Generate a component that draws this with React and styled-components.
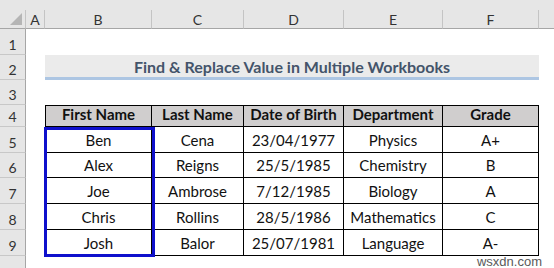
import React from "react";
import styled, { createGlobalStyle } from "styled-components";

const Global = createGlobalStyle`
  html, body { margin: 0; padding: 0; background: #fff; }
  body { font-family: "Lato", "Open Sans", sans-serif; }
`;

const Sheet = styled.div`
  position: relative;
  width: 554px;
  height: 268px;
  overflow: hidden;
  background: #fff;
  display: grid;
  grid-template-columns: 26px 19px 107px 92px 100px 99px 96px 1fr;
  grid-template-rows: 10px 19px 26px 25px 25px 22px 26px 25px 26px 26px 26px 1fr;
  font-family: "Lato", "Open Sans", sans-serif;
`;

const TopStrip = styled.div`
  grid-column: 1 / -1;
  grid-row: 1;
  background: #e6e6e6;
`;

const Corner = styled.div`
  grid-column: 1;
  grid-row: 2;
  background: #e6e6e6;
  border-right: 1px solid #c4c4c4;
  border-bottom: 1px solid #a6a6a6;
  box-sizing: border-box;
  position: relative;
  &::after {
    content: "";
    position: absolute;
    right: 3px;
    bottom: 3px;
    width: 0;
    height: 0;
    border-left: 12px solid transparent;
    border-bottom: 12px solid #b5b5b5;
  }
`;

const ColHead = styled.div`
  grid-row: 2;
  background: #e6e6e6;
  border-right: ${(p) => (p.$last ? "none" : "1px solid #c4c4c4")};
  border-bottom: 1px solid #a6a6a6;
  box-sizing: border-box;
  display: flex;
  align-items: center;
  justify-content: center;
  font-family: "Lato", sans-serif;
  font-size: 14px;
  color: #333;
  padding-top: 1px;
`;

const RowHead = styled.div`
  grid-column: 1;
  background: #e6e6e6;
  border-right: 1px solid #a6a6a6;
  border-bottom: ${(p) => (p.$last ? "none" : "1px solid #c8c8c8")};
  box-sizing: border-box;
  display: flex;
  align-items: flex-end;
  justify-content: center;
  padding-bottom: 1px;
  font-family: "Lato", sans-serif;
  font-size: 14px;
  color: #333;
`;

const Title = styled.div`
  grid-column: 3 / 8;
  grid-row: 4;
  background: #ebebeb;
  border-bottom: 3px solid #adc6e3;
  box-sizing: border-box;
  display: flex;
  align-items: center;
  justify-content: center;
  font-family: "Lato", sans-serif;
  font-weight: 700;
  font-size: 16px;
  color: #44546a;
  padding-top: 1px;
`;

const DataTable = styled.div`
  grid-column: 3 / 8;
  grid-row: 6 / 12;
  display: grid;
  grid-template-columns: 106px 92px 100px 99px 96px;
  grid-template-rows: 21px 26px 25px 26px 26px 26px;
  border-top: 1px solid #000;
  border-left: 1px solid #000;
  align-self: start;
`;

const Cell = styled.div`
  border-right: 1px solid #000;
  border-bottom: 1px solid #000;
  box-sizing: border-box;
  background: ${(p) => (p.$head ? "#d0cece" : "#fff")};
  display: flex;
  align-items: flex-end;
  justify-content: center;
  padding-bottom: 3px;
  font-family: "Lato", sans-serif;
  font-size: 15px;
  font-weight: ${(p) => (p.$head ? 700 : 400)};
  color: #111;
  white-space: nowrap;
`;

const Selection = styled.div`
  position: absolute;
  left: 44px;
  top: 127px;
  width: 111px;
  height: 130px;
  border: 3px solid #0f10cc;
  box-sizing: border-box;
  pointer-events: none;
`;

const Watermark = styled.div`
  position: absolute;
  right: 12px;
  bottom: 0;
  font-family: "Liberation Sans", sans-serif;
  font-size: 13px;
  line-height: 13px;
  color: #5a5a5a;
  text-shadow: 0 0 2px #fff, 0 0 2px #fff;
`;

const cols = ["A", "B", "C", "D", "E", "F", ""];
const headers = ["First Name", "Last Name", "Date of Birth", "Department", "Grade"];
const rows = [
  ["Ben", "Cena", "23/04/1977", "Physics", "A+"],
  ["Alex", "Reigns", "25/5/1985", "Chemistry", "B"],
  ["Joe", "Ambrose", "7/12/1985", "Biology", "A"],
  ["Chris", "Rollins", "28/5/1986", "Mathematics", "C"],
  ["Josh", "Balor", "25/07/1981", "Language", "A-"],
];

export default function App() {
  return (
    <>
      <Global />
      <Sheet>
        <TopStrip />
        <Corner />
        {cols.map((c, i) => (
          <ColHead key={i} style={{ gridColumn: i + 2 }} $last={i === cols.length - 1}>
            {c}
          </ColHead>
        ))}
        {Array.from({ length: 10 }, (_, i) => (
          <RowHead key={i} style={{ gridRow: i + 3 }} $last={i === 9}>
            {i < 9 ? i + 1 : ""}
          </RowHead>
        ))}
        <Title>Find &amp; Replace Value in Multiple Workbooks</Title>
        <DataTable>
          {headers.map((h) => (
            <Cell key={h} $head>
              {h}
            </Cell>
          ))}
          {rows.map((r, ri) =>
            r.map((v, ci) => <Cell key={ri + "-" + ci}>{v}</Cell>)
          )}
        </DataTable>
        <Selection />
        <Watermark>wsxdn.com</Watermark>
      </Sheet>
    </>
  );
}
